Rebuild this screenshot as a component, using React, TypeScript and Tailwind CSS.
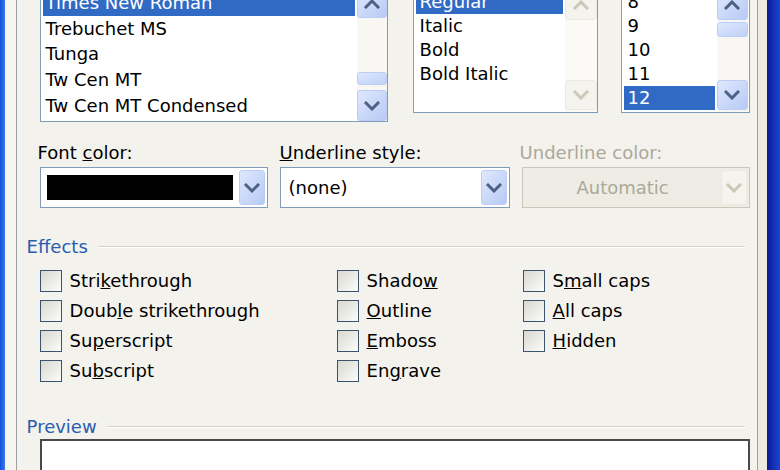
import React from "react";

const Chevron = ({ up, color }: { up?: boolean; color: string }) => (
  <svg width="16" height="10" viewBox="0 0 16 10" fill="none">
    <polyline
      points={up ? "2,8 8,2 14,8" : "2,2 8,8 14,2"}
      stroke={color}
      strokeWidth="3"
      strokeLinecap="square"
    />
  </svg>
);

const ScrollButton = ({ up, disabled, className }: { up?: boolean; disabled?: boolean; className: string }) => (
  <div
    className={`flex items-center justify-center rounded-[3px] border ${
      disabled
        ? "border-[#ebe9df] bg-[#f4f3ee]"
        : "border-[#bccdf4] bg-gradient-to-br from-[#dfe8fd] to-[#b7caf5]"
    } ${className}`}
  >
    <Chevron up={up} color={disabled ? "#cbc8b8" : "#4d6185"} />
  </div>
);

const fonts = ["Times New Roman", "Trebuchet MS", "Tunga", "Tw Cen MT", "Tw Cen MT Condensed"];
const styles = ["Regular", "Italic", "Bold", "Bold Italic"];
const sizes = ["8", "9", "10", "11", "12"];

const Check = ({ children }: { children: React.ReactNode }) => (
  <div className="h-[30px] flex items-center gap-[8px]">
    <div className="w-[22px] h-[22px] border border-[#3a536e] bg-gradient-to-br from-[#d9d8d0] to-[#fcfcfa]" />
    <span>{children}</span>
  </div>
);

const GroupHeader = ({ title }: { title: string }) => (
  <div className="h-[22px] flex items-center gap-[10px] pr-[5px]">
    <span className="text-[#2a5db0]">{title}</span>
    <div className="flex-1 h-[2px] border-t border-[#d3d2c5] bg-white" />
  </div>
);

export default function App() {
  return (
    <div className="w-[780px] h-[470px] overflow-hidden flex bg-[#f3f2ec] font-['DejaVu_Sans',sans-serif] text-[18px] leading-[22px] text-black">
      <div className="w-[5px] bg-gradient-to-r from-[#1150dc] to-[#3f78ea]" />
      <div className="w-[11px] bg-[#f6f5f0]" />

      <div className="flex-1 border-x border-[#9aa1a2] pl-[10px] pr-[7px]">
        {/* lists */}
        <div className="ml-[13px] -mt-[11px] flex items-start gap-[25px]">
          <div className="w-[348px] h-[133px] flex border border-[#7f9db9] bg-white">
            <div className="flex-1 pl-[2px] pr-[2px]">
              {fonts.map((f, i) => (
                <div
                  key={f}
                  className={`h-[25.75px] flex items-center pl-[3px] whitespace-nowrap ${
                    i === 0 ? "bg-[#316ac5] text-white" : ""
                  }`}
                >
                  {f}
                </div>
              ))}
            </div>
            <div className="w-[30px] flex flex-col bg-[#f8f7f3]">
              <ScrollButton up className="h-[28px]" />
              <div className="flex-1" />
              <div className="h-[13px] rounded-[3px] border border-[#bccdf4] bg-gradient-to-br from-[#dfe8fd] to-[#bfd0f7]" />
              <div className="h-[5px]" />
              <ScrollButton className="h-[31px]" />
            </div>
          </div>

          <div className="flex gap-[23px]">
            <div className="w-[185px] h-[124px] flex border border-[#7f9db9] bg-white">
              <div className="flex-1 px-[2px]">
                {styles.map((s, i) => (
                  <div
                    key={s}
                    className={`h-[24px] flex items-center pl-[4px] ${i === 0 ? "bg-[#316ac5] text-white" : ""}`}
                  >
                    {s}
                  </div>
                ))}
              </div>
              <div className="w-[32px] flex flex-col bg-[#fbfaf7]">
                <ScrollButton up disabled className="h-[30px]" />
                <div className="flex-1" />
                <ScrollButton disabled className="h-[30px]" />
                <div className="h-[2px]" />
              </div>
            </div>

            <div className="w-[129px] h-[124px] flex border border-[#7f9db9] bg-white">
              <div className="flex-1 px-[2px]">
                {sizes.map((s, i) => (
                  <div
                    key={s}
                    className={`h-[24px] flex items-center pl-[4px] ${i === 4 ? "bg-[#316ac5] text-white" : ""}`}
                  >
                    {s}
                  </div>
                ))}
              </div>
              <div className="w-[31px] flex flex-col bg-[#f8f7f3] mr-px">
                <ScrollButton up className="h-[30px]" />
                <div className="h-[2px]" />
                <div className="h-[15px] rounded-[3px] border border-[#bccdf4] bg-gradient-to-br from-[#dfe8fd] to-[#bfd0f7]" />
                <div className="flex-1" />
                <ScrollButton className="h-[30px]" />
                <div className="h-[2px]" />
              </div>
            </div>
          </div>
        </div>

        {/* combos */}
        <div className="ml-[13px] mt-[20px] flex gap-[12px]">
          <div className="w-[228px]">
            <div className="-ml-[2px]">
              Font <span className="underline">c</span>olor:
            </div>
            <div className="mt-[3px] h-[41px] flex border border-[#7f9db9] bg-white p-[2px]">
              <div className="flex-1 flex items-center pl-[4px] pr-[6px]">
                <div className="w-full h-[25px] bg-black" />
              </div>
              <ScrollButton className="w-[26px]" />
            </div>
          </div>
          <div className="w-[230px]">
            <div>
              <span className="underline">U</span>nderline style:
            </div>
            <div className="mt-[3px] h-[41px] flex border border-[#7f9db9] bg-white p-[2px]">
              <div className="flex-1 flex items-center pl-[6px]">(none)</div>
              <ScrollButton className="w-[26px]" />
            </div>
          </div>
          <div className="w-[228px]">
            <div className="-ml-[2px] text-[#aca899]">Underline color:</div>
            <div className="mt-[3px] h-[41px] flex border border-[#c9c7ba] bg-[#eeede5] p-[2px]">
              <div className="flex-1 flex items-center justify-center text-[#aca899]">Automatic</div>
              <ScrollButton disabled className="w-[26px]" />
            </div>
          </div>
        </div>

        {/* effects */}
        <div className="mt-[28px]">
          <GroupHeader title="Effects" />
        </div>
        <div className="ml-[13px] mt-[8px] grid grid-cols-[297px_186px_1fr]">
          <div className="flex flex-col">
            <Check>
              Stri<span className="underline">k</span>ethrough
            </Check>
            <Check>
              Doub<span className="underline">l</span>e strikethrough
            </Check>
            <Check>
              Su<span className="underline">p</span>erscript
            </Check>
            <Check>
              Su<span className="underline">b</span>script
            </Check>
          </div>
          <div className="flex flex-col">
            <Check>
              Shado<span className="underline">w</span>
            </Check>
            <Check>
              <span className="underline">O</span>utline
            </Check>
            <Check>
              <span className="underline">E</span>mboss
            </Check>
            <Check>
              En<span className="underline">g</span>rave
            </Check>
          </div>
          <div className="flex flex-col">
            <Check>
              S<span className="underline">m</span>all caps
            </Check>
            <Check>
              <span className="underline">A</span>ll caps
            </Check>
            <Check>
              <span className="underline">H</span>idden
            </Check>
          </div>
        </div>

        {/* preview */}
        <div className="mt-[30px]">
          <GroupHeader title="Preview" />
        </div>
        <div className="ml-[13px] mt-[1px] h-[80px] border-2 border-[#4a4a4a] bg-white" />
      </div>

      <div className="w-[10px] bg-[#ecebe2]" />
      <div className="w-[13px] bg-gradient-to-r from-[#0a1a93] to-[#1d44d0]" />
    </div>
  );
}
